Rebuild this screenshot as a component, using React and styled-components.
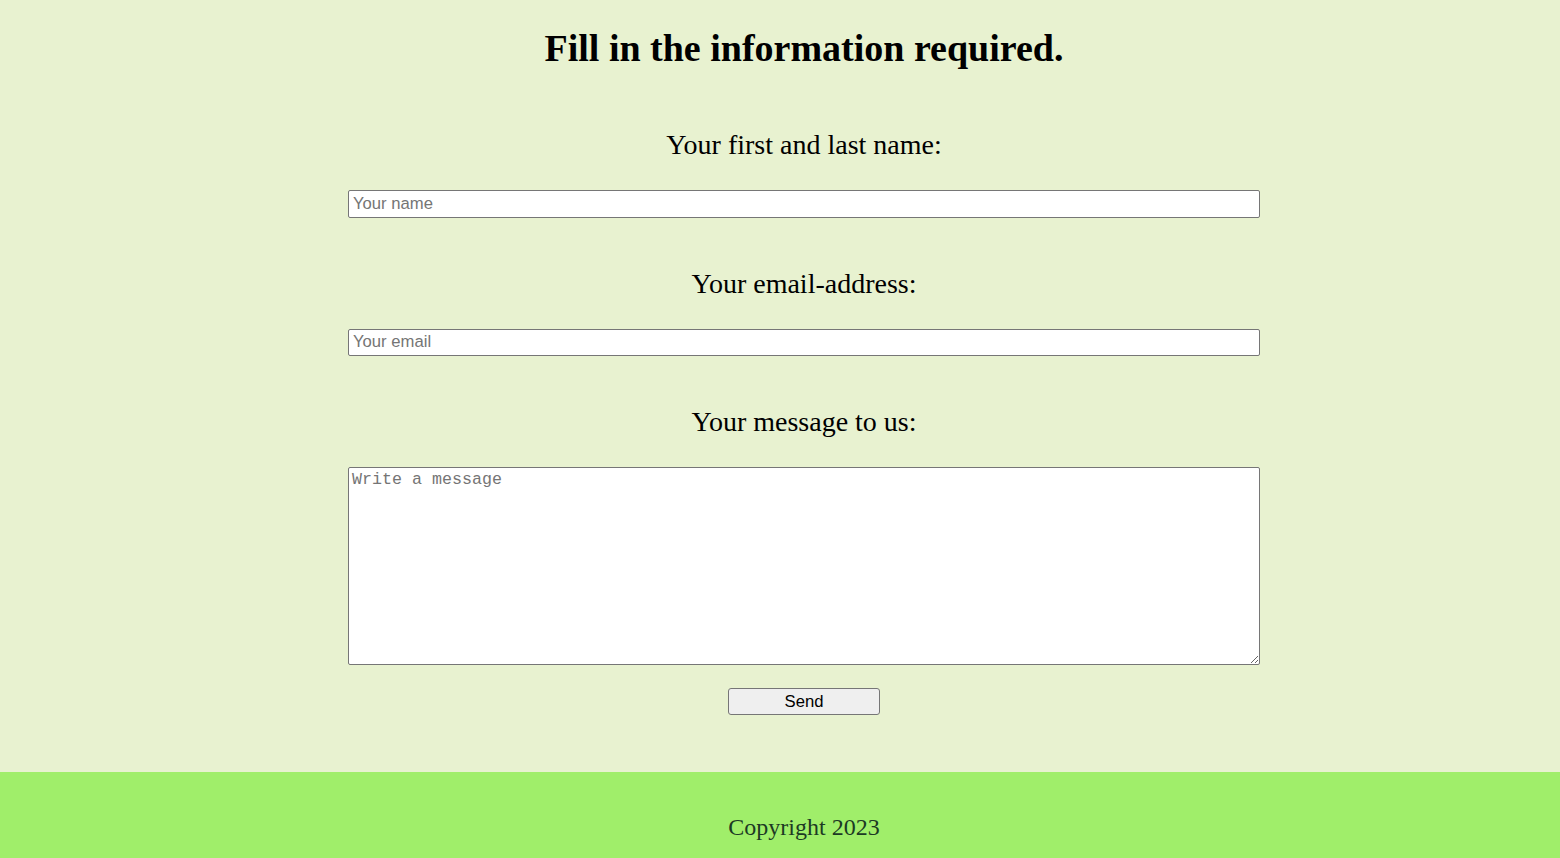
import React from "react";
import styled, { createGlobalStyle } from "styled-components";

const GlobalStyle = createGlobalStyle`
  html, body {
    margin: 0;
    padding: 0;
    background: #e8f2d0;
    font-family: "Liberation Serif", "Times New Roman", serif;
  }
`;

const Page = styled.div`
  min-height: 858px;
  display: flex;
  flex-direction: column;
`;

const Main = styled.main`
  padding: 30px 0 57px 48px;
  display: flex;
  flex-direction: column;
  align-items: center;
`;

const Heading = styled.h1`
  margin: 0 0 64px;
  font-size: 38px;
  line-height: 37px;
  font-weight: bold;
  color: #000;
`;

const Form = styled.form`
  display: flex;
  flex-direction: column;
  align-items: center;
  width: 912px;
`;

const Label = styled.label`
  font-size: 28px;
  line-height: 28px;
  color: #000;
  margin-top: ${(p) => (p.first ? "0" : "52.2px")};
  margin-bottom: 31px;
`;

const Input = styled.input`
  box-sizing: border-box;
  width: 912px;
  height: 27.5px;
  padding: 1px 4px;
  border: 1px solid #767676;
  border-radius: 2px;
  background: #fff;
  font-family: "Liberation Sans", Arial, sans-serif;
  font-size: 16.67px;
  &::placeholder {
    color: #757575;
  }
`;

const TextArea = styled.textarea`
  box-sizing: border-box;
  width: 912px;
  height: 198px;
  padding: 2px 3px;
  border: 1px solid #767676;
  border-radius: 2px;
  background: #fff;
  font-family: "Liberation Mono", "Courier New", monospace;
  font-size: 16.67px;
  &::placeholder {
    color: #757575;
  }
`;

const Button = styled.button`
  box-sizing: border-box;
  margin-top: 23px;
  width: 152px;
  height: 27px;
  border: 1px solid #767676;
  border-radius: 3px;
  background: #efefef;
  font-family: "Liberation Sans", Arial, sans-serif;
  font-size: 16.67px;
  color: #000;
`;

const Footer = styled.footer`
  background: #a0ee6a;
  height: 86px;
  box-sizing: border-box;
  padding: 41px 0 0 48px;
  text-align: center;
  font-size: 24px;
  line-height: 28px;
  color: #1c3a24;
`;

const App = () => (
  <Page>
    <GlobalStyle />
    <Main>
      <Heading>Fill in the information required.</Heading>
      <Form onSubmit={(e) => e.preventDefault()}>
        <Label first htmlFor="name">Your first and last name:</Label>
        <Input id="name" type="text" placeholder="Your name" />
        <Label htmlFor="email">Your email-address:</Label>
        <Input id="email" type="email" placeholder="Your email" />
        <Label htmlFor="message">Your message to us:</Label>
        <TextArea id="message" placeholder="Write a message" />
        <Button type="submit">Send</Button>
      </Form>
    </Main>
    <Footer>Copyright 2023</Footer>
  </Page>
);

export default App;
